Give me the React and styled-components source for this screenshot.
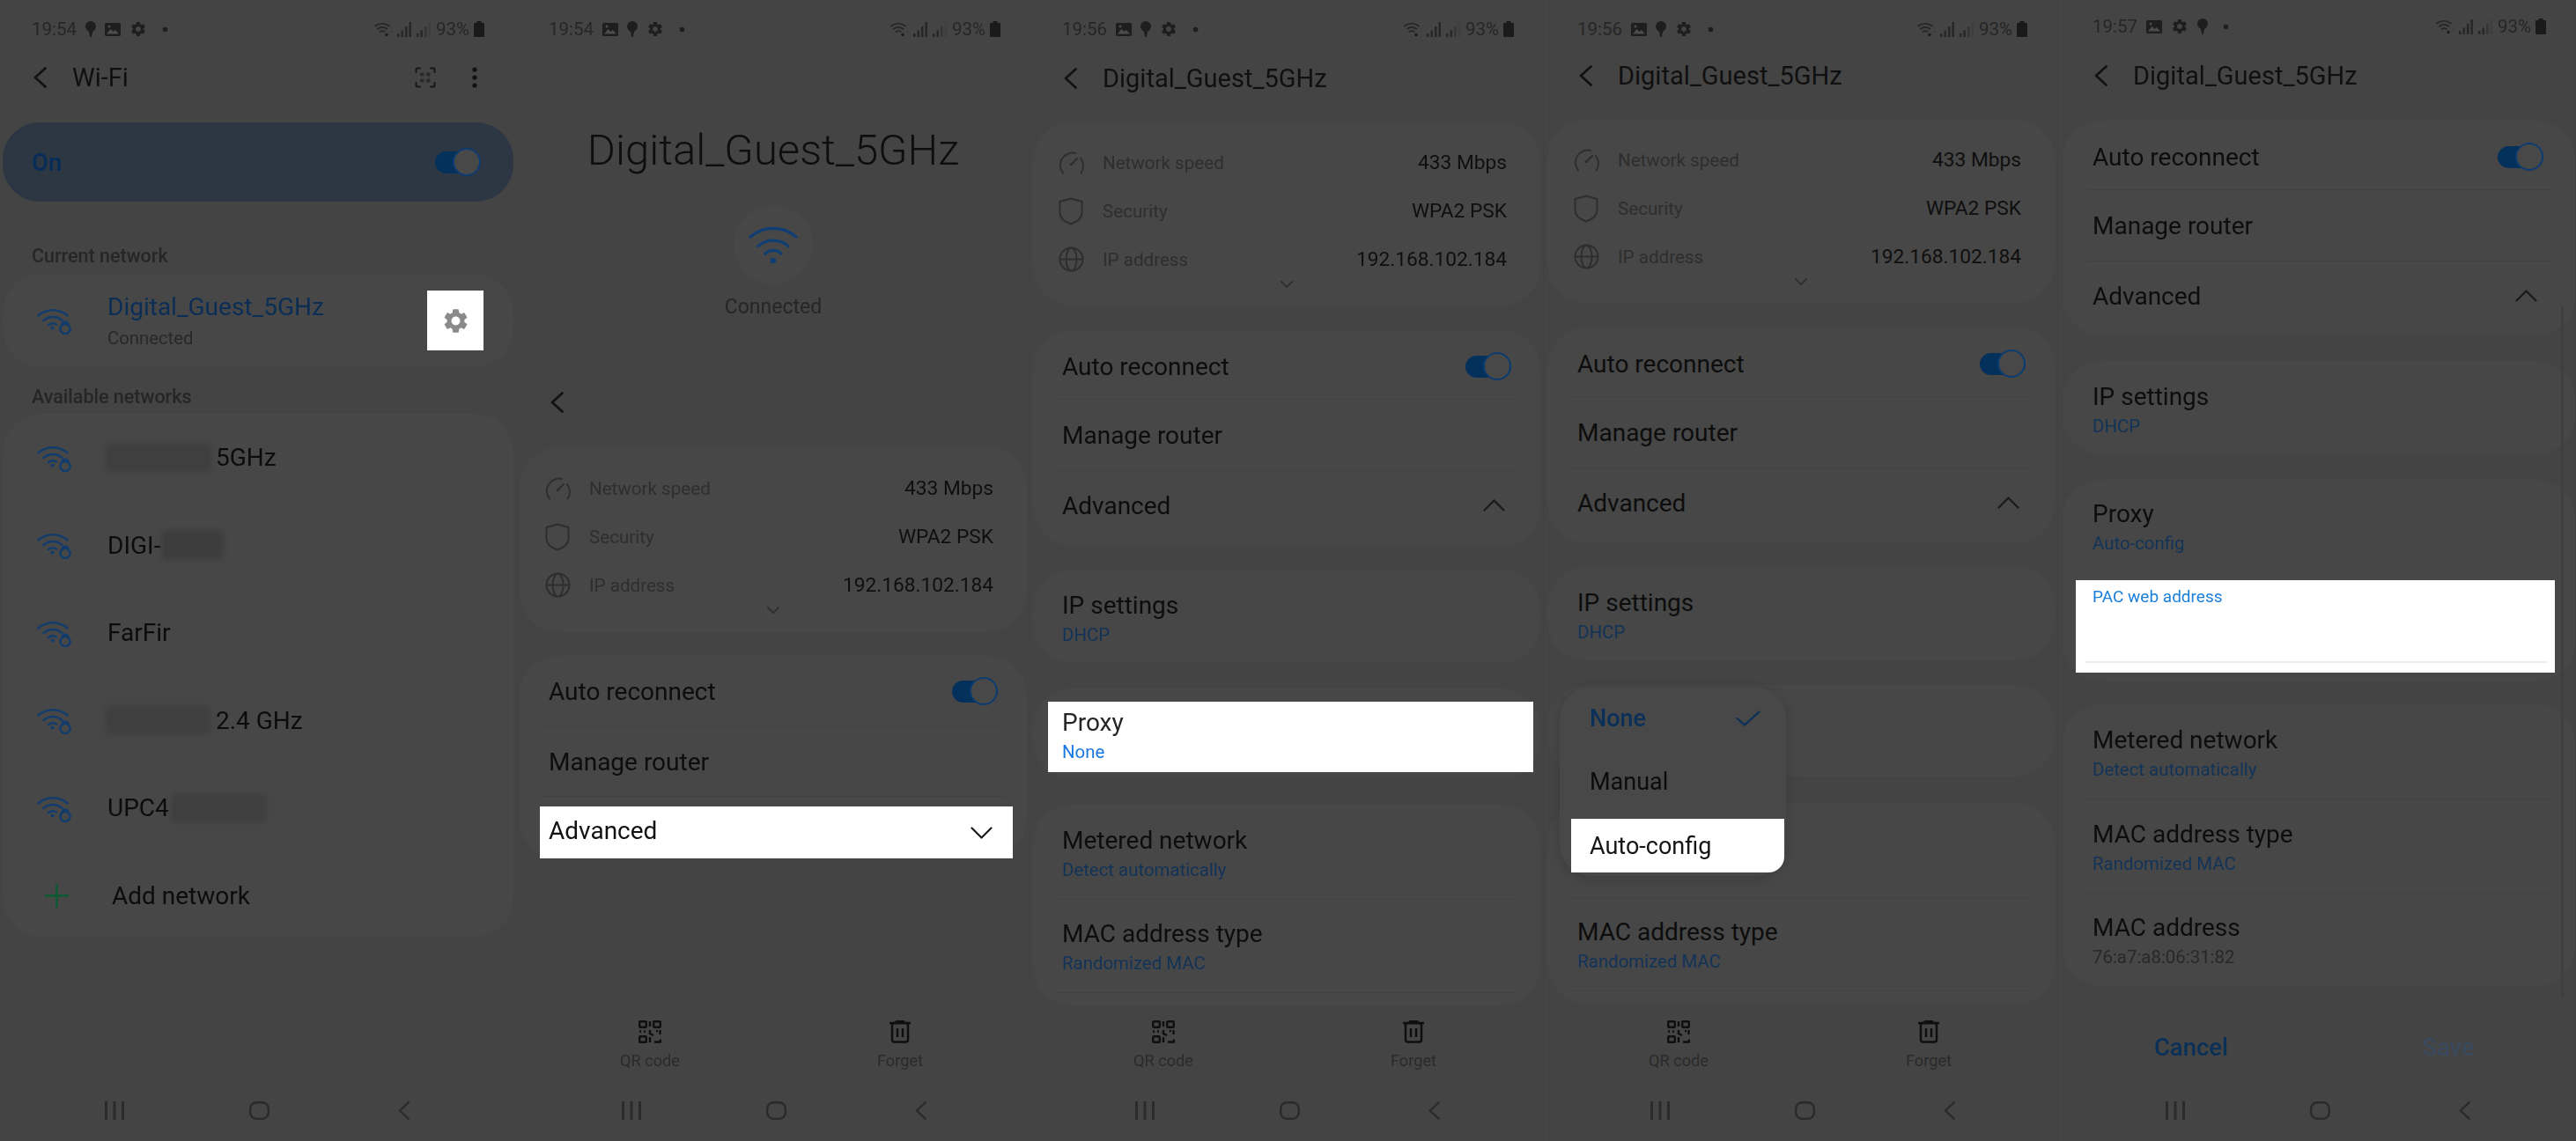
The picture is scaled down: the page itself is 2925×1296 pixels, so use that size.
import React from 'react';
import styled, { createGlobalStyle } from 'styled-components';
import { MdSettings } from 'react-icons/md';

const Global = createGlobalStyle`
  html, body { margin: 0; padding: 0; background: #444444; }
  body { font-family: Roboto, "Liberation Sans", sans-serif; }
`;

const Screen = styled.div`
  display: flex;
  width: 2925px;
  height: 1296px;
  overflow: hidden;
  background: #444444;
`;

const Phone = styled.section`
  --inset: ${p => p.$inset ?? 36}px;
  --cl: ${p => p.$cl ?? 3}px;
  --cr: ${p => p.$cr ?? 3}px;
  position: relative;
  display: flex;
  flex-direction: column;
  flex: none;
  width: ${p => p.$w}px;
  height: 1296px;
  box-sizing: border-box;
  background: #444444;
  border-right: 1px solid #414141;
  filter: blur(0.4px);
`;

const Status = styled.div`
  display: flex;
  align-items: center;
  flex: none;
  height: ${p => p.$h ?? 66}px;
  padding: 0 ${p => p.$r ?? 33}px 0 var(--inset);
  color: #262626;
  font-size: 20.5px;
`;
const StatusLeft = styled.div`
  display: flex;
  align-items: center;
  gap: 10px;
  svg { flex: none; }
`;
const StatusRight = styled.div`
  display: flex;
  align-items: center;
  margin-left: auto;
  gap: 5px;
`;

const Header = styled.header`
  display: flex;
  align-items: center;
  flex: none;
  height: ${p => p.$h ?? 44}px;
  padding-left: calc(var(--inset) + 2px);
  gap: 29px;
  color: #101010;
  font-size: 29px;
`;
const HeaderTools = styled.div`
  display: flex;
  align-items: center;
  margin-left: auto;
  margin-right: 44px;
  gap: 41px;
`;

const OnCard = styled.div`
  display: flex;
  align-items: center;
  justify-content: space-between;
  flex: none;
  height: 90px;
  margin: 29px var(--cr) 0 var(--cl);
  padding: 0 37px 0 calc(var(--inset) - var(--cl));
  border-radius: 42px;
  background: #2d3743;
  color: #042d59;
  font-size: 27.5px;
  font-weight: 500;
`;

const SectionLabel = styled.div`
  display: flex;
  align-items: center;
  flex: none;
  height: 24px;
  margin-top: ${p => p.$mt}px;
  padding-left: var(--inset);
  color: #262626;
  font-size: 21.5px;
  font-weight: 500;
`;

const Card = styled.div`
  position: relative;
  flex: none;
  height: ${p => p.$h}px;
  margin: ${p => p.$mt}px var(--cr) 0 var(--cl);
  padding-top: ${p => p.$pt ?? 0}px;
  box-sizing: border-box;
  border-radius: 44px;
  background: #474747;
`;

const NetRow = styled.div`
  display: flex;
  align-items: center;
  height: ${p => p.$h ?? 99.5}px;
  padding: 0 34px 0 39px;
`;
const NetIcon = styled.div`
  display: flex;
  flex: none;
  width: 80px;
`;
const NetName = styled.div`
  display: flex;
  align-items: center;
  color: #0c0c0c;
  font-size: 28px;
`;
const Redact = styled.span`
  display: inline-block;
  flex: none;
  width: ${p => p.$w}px;
  height: 32px;
  margin: ${p => p.$m};
  background: ${p => p.$c ?? '#3f3f3f'};
  filter: blur(3px);
`;
const CurrentName = styled.div`
  display: flex;
  flex-direction: column;
  color: #0b2e56;
  font-size: 28px;
`;
const CurrentState = styled.span`
  margin-top: 7px;
  color: #282828;
  font-size: 20.3px;
`;
const GearBox = styled.div`
  display: flex;
  align-items: center;
  justify-content: center;
  flex: none;
  width: 64px;
  height: 68px;
  margin-left: auto;
  background: #ffffff;
  color: #8a8a8a;
`;
const AddIcon = styled.div`
  display: flex;
  flex: none;
  width: 85px;
  padding-left: 9px;
  box-sizing: border-box;
`;

const HeroTitle = styled.h1`
  flex: none;
  height: 60px;
  margin: 75px 0 0;
  color: #0e0e0e;
  font-size: 49px;
  font-weight: 300;
  line-height: 60px;
  text-align: center;
`;
const HeroCircle = styled.div`
  display: flex;
  align-items: center;
  justify-content: center;
  flex: none;
  width: 90px;
  height: 90px;
  margin: 32px auto 0;
  border-radius: 50%;
  background: #474747;
`;
const HeroState = styled.div`
  flex: none;
  height: 30px;
  margin-top: 11px;
  color: #262626;
  font-size: 23px;
  line-height: 30px;
  text-align: center;
`;
const HeroBack = styled.div`
  display: flex;
  align-items: center;
  flex: none;
  height: 40px;
  margin-top: 73px;
  padding-left: calc(var(--inset) + 2px);
`;

const InfoRow = styled.div`
  display: flex;
  align-items: center;
  height: 55px;
  padding: 0 38px 0 calc(var(--inset) - 4px - var(--cl));
`;
const InfoIcon = styled.div`
  display: flex;
  flex: none;
  width: 50px;
`;
const InfoLabel = styled.span`
  color: #2e2e2e;
  font-size: 20.6px;
`;
const InfoValue = styled.span`
  margin-left: auto;
  color: #0f0f0f;
  font-size: 22.7px;
`;
const MoreChevron = styled.div`
  display: flex;
  justify-content: center;
  height: 12px;
  margin-top: -3px;
`;

const Row = styled.div`
  display: flex;
  align-items: center;
  box-sizing: border-box;
  height: ${p => p.$h ?? 80}px;
  padding: ${p => p.$pt ?? 0}px calc(36px - var(--cr)) 0 calc(var(--inset) - var(--cl));
  color: #0d0d0d;
  font-size: 28px;
`;
const ChevronSlot = styled.div`
  display: flex;
  margin-left: auto;
  margin-right: ${p => p.$mr ?? 7}px;
`;
const Divider = styled.div`
  height: 1px;
  margin: 0 calc(27px - var(--cr)) 0 calc(var(--inset) - 7px - var(--cl));
  background: #424242;
`;

const Item = styled.div`
  box-sizing: border-box;
  height: ${p => p.$h ?? 'auto'};
  padding: ${p => p.$pt ?? 24}px 0 0 calc(var(--inset) - var(--cl));
`;
const ItemTitle = styled.div`
  height: 34px;
  color: #0d0d0d;
  font-size: 28px;
  line-height: 34px;
`;
const ItemSub = styled.div`
  height: 32px;
  color: ${p => p.$c ?? '#123358'};
  font-size: 20.4px;
  line-height: 32px;
`;

const AdvancedMark = styled.div`
  display: flex;
  align-items: center;
  justify-content: space-between;
  height: 59px;
  margin: 11px 16px 0 23px;
  padding: 0 23px 0 10px;
  background: #ffffff;
  color: #111111;
  font-size: 28px;
`;
const AdvancedText = styled.span`
  margin-bottom: 5px;
`;
const ProxyMark = styled.div`
  box-sizing: border-box;
  height: 80px;
  margin: 15px 8px 0 17px;
  padding: 7px 0 0 16px;
  background: #ffffff;
`;
const ProxyTitle = styled(ItemTitle)`
  color: #262626;
`;
const PacField = styled.div`
  box-sizing: border-box;
  height: 105px;
  margin: 26px 23px 0 15px;
  padding: 9px 0 0 19px;
  background: #ffffff;
`;
const PacLabel = styled.div`
  height: 20px;
  color: #1b7fd9;
  font-size: 19px;
  font-weight: 400;
  line-height: 20px;
`;
const PacLine = styled.div`
  height: 2px;
  margin: 63px 8px 0 -8px;
  background: #ececec;
`;

const Popup = styled.div`
  position: absolute;
  top: 2px;
  left: 14px;
  z-index: 2;
  width: 257px;
  height: 215px;
  border-radius: 36px;
  background: #484848;
  box-shadow: 0 3px 14px rgba(0, 0, 0, 0.16);
`;
const PopupOption = styled.div`
  display: flex;
  align-items: center;
  justify-content: space-between;
  height: 72px;
  padding: 0 29px 0 34px;
  color: ${p => (p.$on ? '#0a2f58' : '#0c0c0c')};
  font-size: 27px;
  font-weight: ${p => (p.$on ? 500 : 400)};
`;
const PopupMark = styled.div`
  display: flex;
  align-items: center;
  height: 61px;
  margin: 6px 2px 0 13px;
  padding-left: 21px;
  border-bottom-right-radius: 18px;
  background: #ffffff;
  color: #151515;
  font-size: 27px;
`;

const Bottom = styled.div`
  display: flex;
  flex-direction: column;
  margin-top: auto;
`;
const ActionBar = styled.div`
  display: flex;
  height: 70px;
  padding-left: calc(var(--inset) + 55px);
  gap: 164px;
`;
const Action = styled.div`
  display: flex;
  flex-direction: column;
  align-items: center;
  width: 120px;
  padding-top: 3px;
  color: #2a2a2a;
  font-size: 18.2px;
  svg { flex: none; }
`;
const ActionLabel = styled.span`
  height: 24px;
  margin-top: 8px;
  line-height: 24px;
`;
const ButtonBar = styled.div`
  display: flex;
  align-items: center;
  height: 66px;
  margin-bottom: 4px;
  padding-left: calc(var(--inset) + 50px);
`;
const TextButton = styled.div`
  width: 124px;
  margin-right: ${p => p.$mr ?? 0}px;
  color: ${p => p.$c};
  font-size: 27.5px;
  font-weight: 500;
  text-align: center;
`;
const Nav = styled.nav`
  display: flex;
  align-items: center;
  height: 70px;
  padding-left: calc(var(--inset) + 74px);
  gap: 124px;
`;
const NavSlot = styled.div`
  display: flex;
  justify-content: center;
  width: 40px;
`;
const Scrollbar = styled.div`
  position: absolute;
  top: 348px;
  right: 13px;
  width: 3px;
  height: 784px;
  background: #3f3f3f;
`;
const Track = styled.div`
  position: relative;
  flex: none;
  width: 52px;
  height: 25px;
  margin-left: auto;
  border-radius: 13px;
  background: #04305c;
`;
const Thumb = styled.div`
  position: absolute;
  top: -3.5px;
  right: 0;
  width: 32px;
  height: 32px;
  box-sizing: border-box;
  border: 2px solid #0c3c70;
  border-radius: 50%;
  background: #484848;
`;

const Toggle = () => <Track><Thumb /></Track>;

const Back = ({ w = 15, h = 24, c = '#111', s = 2.6 }) => (
  <svg width={w} height={h} viewBox="0 0 15 24" fill="none" stroke={c} strokeWidth={s} strokeLinecap="round" strokeLinejoin="round" preserveAspectRatio="none">
    <path d="M13.5 1.5 2 12l11.5 10.5" />
  </svg>
);
const Chevron = ({ up, w = 25, h = 14, c = '#1a1a1a', s = 2.2 }) => (
  <svg width={w} height={h} viewBox="0 0 25 14" fill="none" stroke={c} strokeWidth={s} strokeLinecap="round" strokeLinejoin="round">
    <path d={up ? 'M1.5 12.5 12.5 1.5l11 11' : 'M1.5 1.5l11 11 11-11'} />
  </svg>
);
const Pin = () => (
  <svg width="12" height="19" viewBox="0 0 12 19" fill="#1e1e1e">
    <circle cx="6" cy="6" r="6" />
    <path d="M3.5 10h5L6.8 18H5.2z" />
  </svg>
);
const Picture = () => (
  <svg width="18" height="15" viewBox="0 0 18 15">
    <rect width="18" height="15" rx="1.5" fill="#1e1e1e" />
    <path d="M2 12.5 6.5 7l3 3 2.2-2 4.3 4.5z" fill="#4c4c4c" />
    <circle cx="5" cy="4" r="1.5" fill="#4c4c4c" />
  </svg>
);
const StatusGear = () => <MdSettings size={20} color="#1e1e1e" />;
const Dot = () => (
  <svg width="7" height="7" viewBox="0 0 7 7" style={{ marginLeft: 7 }}>
    <circle cx="3.5" cy="3.5" r="2.8" fill="#1e1e1e" />
  </svg>
);
const StatusWifi = () => (
  <svg width="21" height="18" viewBox="0 0 21 18" fill="none" stroke="#262626" strokeWidth="1.7" strokeLinecap="round">
    <path d="M1 5.5a13 13 0 0 1 16 0M3.8 8.8a9 9 0 0 1 10.6 0M6.5 12a5 5 0 0 1 5.2 0" />
    <circle cx="14" cy="15.5" r="1.7" fill="#1a1a1a" stroke="none" />
    <circle cx="19.5" cy="12" r="1" fill="#3a3a3a" stroke="none" />
  </svg>
);
const Signal = ({ dim }) => (
  <svg width="17" height="18" viewBox="0 0 17 18">
    <rect x="0" y="14" width="2.4" height="4" fill="#262626" />
    <rect x="4.5" y="10.5" width="2.4" height="7.5" fill="#262626" />
    <rect x="9" y="6" width="2.4" height="12" fill={dim ? '#343434' : '#262626'} />
    <rect x="13.5" y="1" width="2.4" height="17" fill={dim ? '#3f3f3f' : '#262626'} />
  </svg>
);
const Battery = () => (
  <svg width="12" height="18" viewBox="0 0 12 18">
    <rect x="3.5" y="0" width="5" height="2.5" fill="#1a1a1a" />
    <rect x="0" y="2" width="12" height="16" rx="1" fill="#1a1a1a" />
  </svg>
);
const Scan = () => (
  <svg width="24" height="24" viewBox="0 0 24 24" fill="none" stroke="#161616" strokeWidth="2" strokeLinecap="round">
    <path d="M1.5 6V3a1.5 1.5 0 0 1 1.5-1.5h3M18 1.5h3A1.5 1.5 0 0 1 22.5 3v3M22.5 18v3a1.5 1.5 0 0 1-1.5 1.5h-3M6 22.5H3A1.5 1.5 0 0 1 1.5 21v-3" />
    <path d="M7 7h3v3H7zM14 7h3v3h-3zM7 14h3v3H7zM14 14h3v3h-3z" fill="#2a2a2a" stroke="#2a2a2a" strokeWidth="1" />
  </svg>
);
const Dots = () => (
  <svg width="6" height="24" viewBox="0 0 6 24" fill="#111">
    <circle cx="3" cy="3" r="2.6" />
    <circle cx="3" cy="12" r="2.6" />
    <circle cx="3" cy="21" r="2.6" />
  </svg>
);
const WifiLock = () => (
  <svg width="40" height="32" viewBox="0 0 40 32" fill="none" stroke="#123c6c" strokeWidth="2.5" strokeLinecap="round">
    <path d="M1.5 10.5a25 25 0 0 1 33 0M7.5 16a16 16 0 0 1 21 0M13 21a8 8 0 0 1 9 -.5" />
    <circle cx="17.5" cy="24.5" r="2" fill="#123c6c" stroke="none" />
    <circle cx="32" cy="25.5" r="5.6" />
    <path d="M28.5 20.5a3.6 3.6 0 0 1 7 0" />
  </svg>
);
const HeroWifi = () => (
  <svg width="56" height="44" viewBox="0 0 56 44" fill="none" stroke="#0f3e74" strokeWidth="3.2" strokeLinecap="round">
    <path d="M2 13a40 40 0 0 1 52 0M11 23.5a26 26 0 0 1 34 0M19 32a13 13 0 0 1 18 0" />
    <circle cx="28" cy="40" r="3.2" fill="#0f3e74" stroke="none" />
  </svg>
);
const Plus = () => (
  <svg width="27" height="27" viewBox="0 0 27 27" stroke="#0a5a32" strokeWidth="2.4">
    <path d="M13.5 0v27M0 13.5h27" />
  </svg>
);
const Gauge = () => (
  <svg width="30" height="26" viewBox="0 0 30 26" fill="none" stroke="#2e2e2e" strokeWidth="2" strokeLinecap="round">
    <path d="M5 24.5A14 14 0 0 1 19 2M25 8a14 14 0 0 1 .5 16.5" />
    <path d="M14 15l7-7" />
    <circle cx="14.5" cy="14.5" r="1.6" fill="#2e2e2e" stroke="none" />
  </svg>
);
const Shield = () => (
  <svg width="28" height="32" viewBox="0 0 28 32" fill="none" stroke="#2e2e2e" strokeWidth="2" strokeLinejoin="round">
    <path d="M14 1.5 26.5 5v13c0 6-5.5 10-12.5 12.5C7 28 1.5 24 1.5 18V5z" />
  </svg>
);
const Globe = () => (
  <svg width="29" height="29" viewBox="0 0 29 29" fill="none" stroke="#2e2e2e" strokeWidth="2">
    <circle cx="14.5" cy="14.5" r="13" />
    <ellipse cx="14.5" cy="14.5" rx="6" ry="13" />
    <path d="M1.5 14.5h26" />
  </svg>
);
const Qr = () => (
  <svg width="26" height="26" viewBox="0 0 26 26" fill="none" stroke="#0f0f0f" strokeWidth="2.4">
    <rect x="1.2" y="1.2" width="7.6" height="6.6" rx="1" />
    <rect x="17.2" y="1.2" width="7.6" height="6.6" rx="1" />
    <rect x="1.2" y="18.2" width="7.6" height="6.6" rx="1" />
    <path d="M13 1v6M1 12.5h2M6 12.5h2M13 11v4l4 2M20 12h2M24.5 11v5M13 19v6M18 24.5h7v-3" />
  </svg>
);
const Trash = () => (
  <svg width="24" height="26" viewBox="0 0 24 26" fill="none" stroke="#0f0f0f" strokeWidth="2.5">
    <path d="M0 3h24M8 3V1h8v2" />
    <rect x="3" y="3" width="18" height="21.5" rx="2.5" />
    <path d="M9 9v10M15 9v10" />
  </svg>
);
const Bars = () => (
  <svg width="22" height="21" viewBox="0 0 22 21" fill="#2a2a2a">
    <rect x="0" width="3" height="21" />
    <rect x="9.5" width="3" height="21" />
    <rect x="19" width="3" height="21" />
  </svg>
);
const Home = () => (
  <svg width="23" height="21" viewBox="0 0 23 21" fill="none" stroke="#2a2a2a" strokeWidth="2.4">
    <rect x="1.2" y="1.2" width="20.6" height="18.6" rx="7" />
  </svg>
);

const glyphs = { pin: <Pin />, pic: <Picture />, gear: <StatusGear /> };

const StatusBar = ({ time, order, h, r }) => (
  <Status $h={h} $r={r}>
    <StatusLeft>
      <span>{time}</span>
      {order.map(k => <React.Fragment key={k}>{glyphs[k]}</React.Fragment>)}
      <Dot />
    </StatusLeft>
    <StatusRight>
      <StatusWifi />
      <Signal />
      <Signal dim />
      <span>93%</span>
      <Battery />
    </StatusRight>
  </Status>
);

const NavBar = () => (
  <Nav>
    <NavSlot><Bars /></NavSlot>
    <NavSlot><Home /></NavSlot>
    <NavSlot><Back w={13} h={21} c="#2a2a2a" s={2.6} /></NavSlot>
  </Nav>
);

const Actions = () => (
  <ActionBar>
    <Action><Qr /><ActionLabel>QR code</ActionLabel></Action>
    <Action><Trash /><ActionLabel>Forget</ActionLabel></Action>
  </ActionBar>
);

const Details = () => (
  <>
    <InfoRow><InfoIcon><Gauge /></InfoIcon><InfoLabel>Network speed</InfoLabel><InfoValue>433 Mbps</InfoValue></InfoRow>
    <InfoRow><InfoIcon><Shield /></InfoIcon><InfoLabel>Security</InfoLabel><InfoValue>WPA2 PSK</InfoValue></InfoRow>
    <InfoRow><InfoIcon><Globe /></InfoIcon><InfoLabel>IP address</InfoLabel><InfoValue>192.168.102.184</InfoValue></InfoRow>
    <MoreChevron><Chevron w={14} h={8} c="#2e2e2e" s={3} /></MoreChevron>
  </>
);

const Two = ({ title, sub, pt, h, c }) => (
  <Item $pt={pt} $h={h}>
    <ItemTitle>{title}</ItemTitle>
    <ItemSub $c={c}>{sub}</ItemSub>
  </Item>
);

const ReconnectRows = () => (
  <>
    <Row $h={78} $pt={4}><span>Auto reconnect</span><Toggle /></Row>
    <Divider />
    <Row><span>Manage router</span></Row>
    <Divider />
    <Row $h={78}><span>Advanced</span><ChevronSlot><Chevron up /></ChevronSlot></Row>
  </>
);

const Check = () => (
  <svg width="28" height="18" viewBox="0 0 28 18" fill="none" stroke="#0a2f58" strokeWidth="2.2" strokeLinecap="round">
    <path d="M1.5 9 10 16.5 26.5 1.5" />
  </svg>
);

export default function App() {
  return (
    <Screen>
      <Global />

      <Phone $w={587}>
        <StatusBar time="19:54" order={['pin', 'pic', 'gear']} r={36} />
        <Header>
          <Back />
          <span>Wi-Fi</span>
          <HeaderTools><Scan /><Dots /></HeaderTools>
        </Header>
        <OnCard><span>On</span><Toggle /></OnCard>
        <SectionLabel $mt={49}>Current network</SectionLabel>
        <Card $h={106} $mt={9}>
          <NetRow $h={106}>
            <NetIcon><WifiLock /></NetIcon>
            <CurrentName>
              <span>Digital_Guest_5GHz</span>
              <CurrentState>Connected</CurrentState>
            </CurrentName>
            <GearBox><MdSettings size={33} /></GearBox>
          </NetRow>
        </Card>
        <SectionLabel $mt={21}>Available networks</SectionLabel>
        <Card $h={594} $mt={8}>
          <NetRow>
            <NetIcon><WifiLock /></NetIcon>
            <NetName><Redact $w={120} $m="0 5px 0 -2px" />5GHz</NetName>
          </NetRow>
          <NetRow>
            <NetIcon><WifiLock /></NetIcon>
            <NetName>DIGI-<Redact $w={69} $m="0 0 0 2px" $c="#3c3c3c" /></NetName>
          </NetRow>
          <NetRow>
            <NetIcon><WifiLock /></NetIcon>
            <NetName>FarFir</NetName>
          </NetRow>
          <NetRow>
            <NetIcon><WifiLock /></NetIcon>
            <NetName><Redact $w={118} $m="0 7px 0 -2px" />2.4 GHz</NetName>
          </NetRow>
          <NetRow>
            <NetIcon><WifiLock /></NetIcon>
            <NetName>UPC4<Redact $w={107} $m="0 0 0 3px" /></NetName>
          </NetRow>
          <NetRow>
            <AddIcon><Plus /></AddIcon>
            <NetName>Add network</NetName>
          </NetRow>
        </Card>
        <Bottom><NavBar /></Bottom>
      </Phone>

      <Phone $w={583}>
        <StatusBar time="19:54" order={['pic', 'pin', 'gear']} />
        <HeroTitle>Digital_Guest_5GHz</HeroTitle>
        <HeroCircle><HeroWifi /></HeroCircle>
        <HeroState>Connected</HeroState>
        <HeroBack><Back /></HeroBack>
        <Card $h={210} $mt={31} $pt={19}><Details /></Card>
        <Card $h={230} $mt={27}>
          <Row><span>Auto reconnect</span><Toggle /></Row>
          <Divider />
          <Row $h={78}><span>Manage router</span></Row>
          <Divider />
          <AdvancedMark>
            <AdvancedText>Advanced</AdvancedText>
            <Chevron />
          </AdvancedMark>
        </Card>
        <Bottom><Actions /><NavBar /></Bottom>
      </Phone>

      <Phone $w={583}>
        <StatusBar time="19:56" order={['pic', 'pin', 'gear']} />
        <Header $h={46}><Back /><span>Digital_Guest_5GHz</span></Header>
        <Card $h={208} $mt={27} $pt={18}><Details /></Card>
        <Card $h={245} $mt={28}><ReconnectRows /></Card>
        <Card $h={106} $mt={27}><Two title="IP settings" sub="DHCP" /></Card>
        <Card $h={103} $mt={29}>
          <ProxyMark>
            <ProxyTitle>Proxy</ProxyTitle>
            <ItemSub $c="#1878e0">None</ItemSub>
          </ProxyMark>
        </Card>
        <Card $h={228} $mt={29}>
          <Two title="Metered network" sub="Detect automatically" pt={24} h="107px" />
          <Divider />
          <Two title="MAC address type" sub="Randomized MAC" pt={22} h="105px" />
          <Divider />
        </Card>
        <Bottom><Actions /><NavBar /></Bottom>
      </Phone>

      <Phone $w={584} $inset={38} $cl={4}>
        <StatusBar time="19:56" order={['pic', 'pin', 'gear']} r={34} />
        <Header $h={40}><Back /><span>Digital_Guest_5GHz</span></Header>
        <Card $h={208} $mt={30} $pt={18}><Details /></Card>
        <Card $h={245} $mt={28}><ReconnectRows /></Card>
        <Card $h={106} $mt={27}><Two title="IP settings" sub="DHCP" /></Card>
        <Card $h={104} $mt={28}>
          <Popup>
            <PopupOption $on><span>None</span><Check /></PopupOption>
            <PopupOption>Manual</PopupOption>
            <PopupMark>Auto-config</PopupMark>
          </Popup>
        </Card>
        <Card $h={228} $mt={30}>
          <Item $h="107px" />
          <Divider />
          <Two title="MAC address type" sub="Randomized MAC" pt={22} h="105px" />
          <Divider />
        </Card>
        <Bottom><Actions /><NavBar /></Bottom>
      </Phone>

      <Phone $w={588} $inset={39} $cl={5} $cr={0}>
        <StatusBar time="19:57" order={['pic', 'gear', 'pin']} h={60} />
        <Header $h={52}><Back /><span>Digital_Guest_5GHz</span></Header>
        <Card $h={244} $mt={25}><ReconnectRows /></Card>
        <Card $h={106} $mt={29}><Two title="IP settings" sub="DHCP" /></Card>
        <Card $h={229} $mt={29}>
          <Two title="Proxy" sub="Auto-config" pt={22} />
          <PacField>
            <PacLabel>PAC web address</PacLabel>
            <PacLine />
          </PacField>
        </Card>
        <Card $h={320} $mt={26}>
          <Two title="Metered network" sub="Detect automatically" pt={24} h="108px" />
          <Divider />
          <Two title="MAC address type" sub="Randomized MAC" pt={22} h="105px" />
          <Divider />
          <Two title="MAC address" sub="76:a7:a8:06:31:82" pt={22} c="#282828" />
        </Card>
        <Bottom>
          <ButtonBar>
            <TextButton $c="#0a3057" $mr={168}>Cancel</TextButton>
            <TextButton $c="#3a4a5c">Save</TextButton>
          </ButtonBar>
          <NavBar />
        </Bottom>
        <Scrollbar />
      </Phone>
    </Screen>
  );
}
